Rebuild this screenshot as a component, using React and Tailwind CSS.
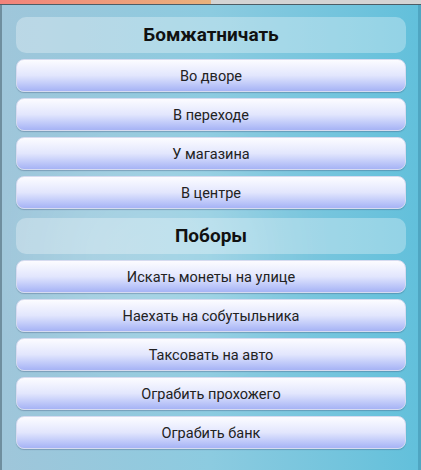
// Экран действий: две группы (Бомжатничать, Поборы) со списком кнопок
const GROUPS = [
  {
    title: 'Бомжатничать',
    items: ['Во дворе', 'В переходе', 'У магазина', 'В центре'],
  },
  {
    title: 'Поборы',
    items: [
      'Искать монеты на улице',
      'Наехать на собутыльника',
      'Таксовать на авто',
      'Ограбить прохожего',
      'Ограбить банк',
    ],
  },
]

function Header({ title }) {
  return (
    <div className="h-[36px] rounded-[10px] bg-white/30 flex items-center justify-center">
      <span className="text-[19px] font-bold text-[#111] leading-normal">{title}</span>
    </div>
  )
}

function ActionButton({ label }) {
  return (
    <button
      type="button"
      className="h-[33px] w-full rounded-[8px] border border-[#d6dbf0] bg-gradient-to-b from-[#fcfcff] via-[#e2e6fd] to-[#a6b3f5] shadow-[0_1px_1px_rgba(60,80,120,0.35)] flex items-center justify-center"
    >
      <span className="text-[14.5px] text-[#222] leading-normal pt-[2px]">{label}</span>
    </button>
  )
}

export default function App() {
  return (
    <div
      className="w-[421px] h-[470px] overflow-hidden flex flex-col"
      style={{ fontFamily: 'Roboto, "Noto Sans", sans-serif' }}
    >
      {/* Верхняя полоса */}
      <div className="h-[4px] flex flex-shrink-0">
        <div className="w-[211px] bg-gradient-to-r from-[#f2827a] to-[#e9b27c]" />
        <div className="flex-1 bg-[#d4d4d4]" />
      </div>
      <div className="h-[1px] bg-[#4d5d66] flex-shrink-0" />

      {/* Основная область */}
      <div className="relative flex-1 border-l-2 border-l-[#6f8e9e] border-r-[3px] border-r-[#4fa6c2] bg-gradient-to-r from-[#9fc6da] via-[#8ccbe0] to-[#62c0db] overflow-hidden">
        <div className="absolute left-[40px] top-[150px] w-[220px] h-[200px] rounded-full bg-white/20 blur-2xl" />
        <div className="relative pl-[14px] pr-[12px] pt-[12px] flex flex-col">
          {GROUPS.map((group, gi) => (
            <div key={group.title} className={gi > 0 ? 'mt-[9px]' : ''}>
              <Header title={group.title} />
              <div className="mt-[6px] flex flex-col gap-[6px]">
                {group.items.map(item => (
                  <ActionButton key={item} label={item} />
                ))}
              </div>
            </div>
          ))}
        </div>
      </div>
    </div>
  )
}
